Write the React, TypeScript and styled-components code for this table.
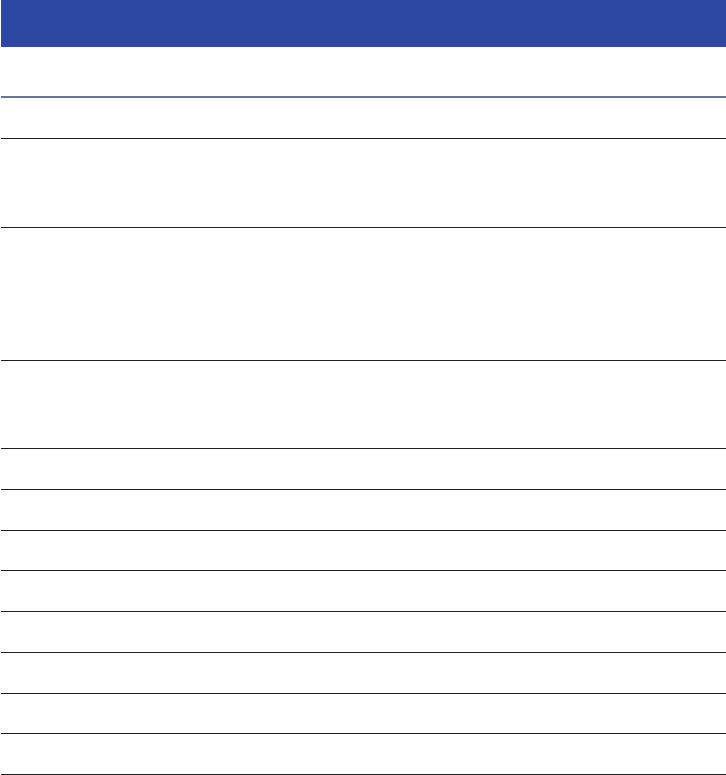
import React from 'react';
import styled, { createGlobalStyle } from 'styled-components';

const GlobalStyle = createGlobalStyle`
    html, body {
        margin: 0;
        padding: 0;
        background: #ffffff;
        font-family: "Liberation Sans", Arial, sans-serif;
    }
`;

const Table = styled.div`
    display: flex;
    flex-direction: column;
    margin-left: 1px;
    width: 725px;
`;

const HeaderBar = styled.div`
    height: 47px;
    background: #2d48a3;
`;

const Row = styled.div<{ $height: number; $accent?: boolean }>`
    height: ${props => props.$height}px;
    border-bottom: ${props => props.$accent ? '2px solid #687791' : '1px solid #1e1e1e'};
`;

const rows = [
    { height: 49, accent: true },
    { height: 40 },
    { height: 88 },
    { height: 132 },
    { height: 87 },
    { height: 39.75 },
    { height: 39.75 },
    { height: 39.75 },
    { height: 39.75 },
    { height: 39.75 },
    { height: 39.75 },
    { height: 39.75 },
    { height: 39.75 },
];

export default function App() {
    return (
        <>
            <GlobalStyle />
            <Table>
                <HeaderBar />
                {rows.map((row, i) => (
                    <Row key={i} $height={row.height} $accent={row.accent} />
                ))}
            </Table>
        </>
    );
}
